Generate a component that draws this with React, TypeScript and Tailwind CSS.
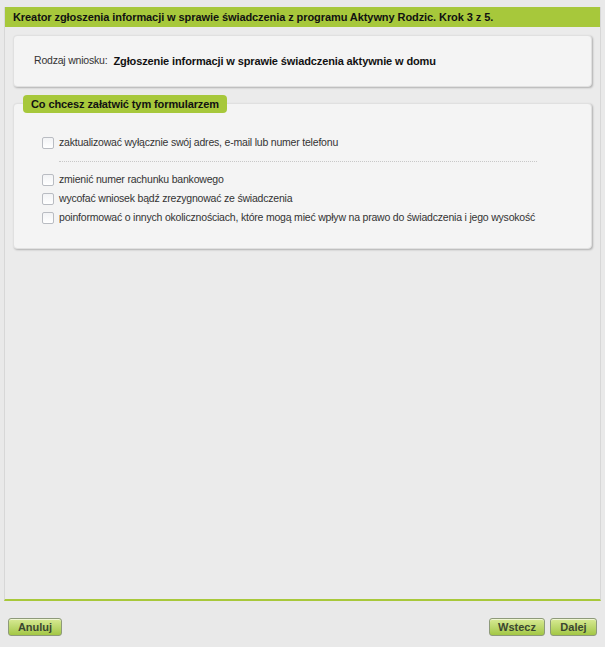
import React from "react";

const options = [
  "zmienić numer rachunku bankowego",
  "wycofać wniosek bądź zrezygnować ze świadczenia",
  "poinformować o innych okolicznościach, które mogą mieć wpływ na prawo do świadczenia i jego wysokość",
];

function Box() {
  return (
    <span className="inline-block w-[12px] h-[12px] shrink-0 border border-[#b9bcc2] rounded-[2px] bg-gradient-to-b from-[#f2f3f5] to-[#ffffff]" />
  );
}

function Btn({ label, width }: { label: string; width: string }) {
  return (
    <button
      className={`${width} h-[18px] rounded-[3px] border border-[#8e9a7a] bg-gradient-to-b from-[#d8ea93] to-[#a3c743] text-[11px] font-bold text-[#3b4630] shadow-[inset_0_1px_0_rgba(255,255,255,0.6)]`}
    >
      {label}
    </button>
  );
}

export default function App() {
  return (
    <div className="w-[605px] h-[647px] bg-[#e9e9e9] flex flex-col text-[11px] text-[#222]" style={{ fontFamily: '"Liberation Sans", Arial, sans-serif' }}>
      <div className="mt-[7px] mx-[4px] h-[594px] flex flex-col border-l border-r border-[#d7d7d7] border-b-2 border-b-[#a8c83a] bg-[#ebebeb]">
        <div className="h-[20px] bg-[#a7c83b] flex items-center px-[8px] font-bold text-[#111] tracking-[-0.08px]">
          Kreator zgłoszenia informacji w sprawie świadczenia z programu Aktywny Rodzic. Krok 3 z 5.
        </div>

        <div className="px-[8px] pt-[8px] flex flex-col">
          {/* Rodzaj wniosku */}
          <div className="h-[52px] rounded-[4px] bg-[#f4f4f4] border border-[#e0e0e0] shadow-[1px_1px_2px_rgba(0,0,0,0.25)] flex items-center pl-[20px]">
            <span className="text-[#333] text-[10.5px] tracking-[-0.2px]">Rodzaj wniosku:</span>
            <span className="ml-[6px] font-bold text-[#111] tracking-[-0.12px]">Zgłoszenie informacji w sprawie świadczenia aktywnie w domu</span>
          </div>

          {/* Co chcesz załatwić */}
          <div className="relative mt-[16px] rounded-[4px] bg-[#f4f4f4] border border-[#e0e0e0] shadow-[1px_1px_2px_rgba(0,0,0,0.25)] pt-[30px] pb-[21px] pl-[28px] text-[10.5px] tracking-[-0.2px]">
            <div className="absolute left-[9px] top-[-9px] h-[18px] px-[8px] rounded-[4px] bg-[#a7c83b] flex items-center font-bold text-[#111] text-[11px] tracking-[-0.1px]">
              Co chcesz załatwić tym formularzem
            </div>
            <label className="flex items-center gap-[5px] h-[18px]">
              <Box />
              <span className="text-[#333]">zaktualizować wyłącznie swój adres, e-mail lub numer telefonu</span>
            </label>
            <div className="ml-[17px] mr-[54px] my-[9px] border-t border-dotted border-[#c8c8c8]" />
            <div className="flex flex-col gap-[1px]">
              {options.map((o) => (
                <label key={o} className="flex items-center gap-[5px] h-[18px]">
                  <Box />
                  <span className="text-[#333]">{o}</span>
                </label>
              ))}
            </div>
          </div>
        </div>
      </div>

      <div className="flex items-center px-[8px] mt-[17px]">
        <Btn label="Anuluj" width="w-[54px]" />
        <div className="flex-1" />
        <Btn label="Wstecz" width="w-[56px]" />
        <div className="w-[5px]" />
        <Btn label="Dalej" width="w-[47px]" />
      </div>
    </div>
  );
}
